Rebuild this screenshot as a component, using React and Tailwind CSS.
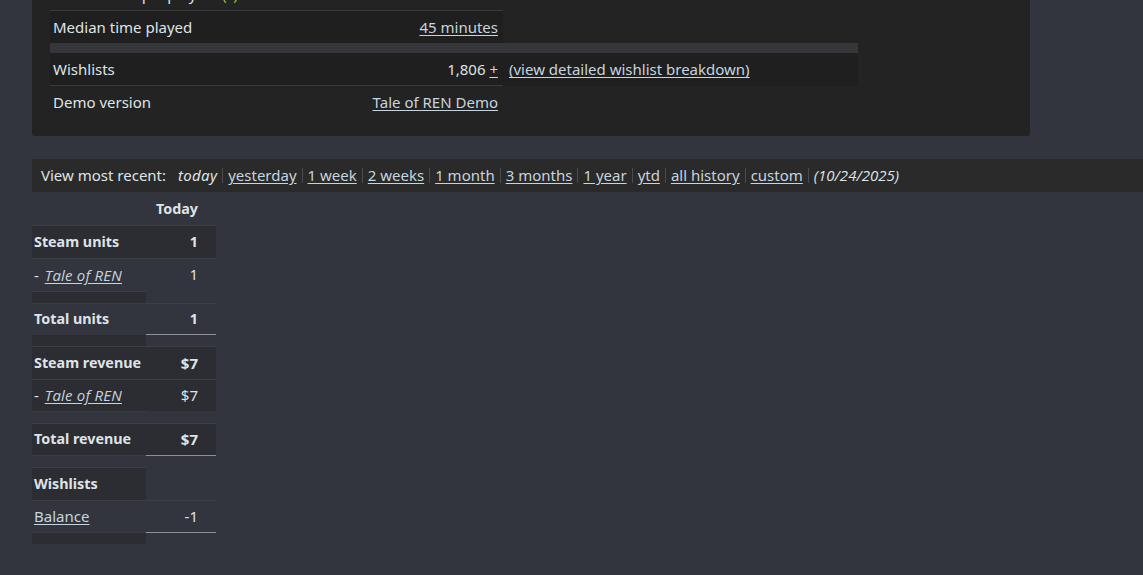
import React from "react";

const Sep = () => <span className="mx-[5px] inline-block h-[15px] w-px bg-[#4a4b4e] align-middle" />;
const L = ({ children, className = "" }) => (
  <a className={"text-[#c6d4df] underline underline-offset-2 " + className}>{children}</a>
);

function Row({ h, c1, c2, bg1 = "", bg2 = "", t1 = true, t2 = true, b1 = "", b2 = "" }) {
  return (
    <div className="flex">
      <div
        className={
          "flex w-[114px] items-center pl-[2px] " +
          (t1 ? "border-t border-[#3c3e44] " : "border-t border-transparent ") +
          bg1 + " " + b1
        }
        style={{ height: h }}
      >
        {c1}
      </div>
      <div
        className={
          "flex w-[70px] items-center justify-end pr-[18px] " +
          (t2 ? "border-t border-[#3c3e44] " : "border-t border-transparent ") +
          bg2 + " " + b2
        }
        style={{ height: h }}
      >
        {c2}
      </div>
    </div>
  );
}

const Game = () => (
  <span className="text-[15px]">
    -{" "}
    <L className="ml-[2px] font-['Open_Sans',sans-serif] italic tracking-[0.2px]">Tale of REN</L>
  </span>
);

export default function App() {
  const dark = "bg-[#2b2d33]";
  return (
    <div className="min-h-[575px] bg-[#32353e] font-['Noto_Sans',sans-serif] text-[15px] leading-none text-[#dfe3e6]">
      {/* top panel */}
      <div className="ml-[32px] w-[998px] rounded-b-[3px] bg-[#232323] pb-[18px] pl-[18px]">
        <div className="relative h-[11px] w-[453px] overflow-hidden border-b border-[#3a3a3a]">
          <div className="absolute bottom-[8px] left-[3px] whitespace-nowrap leading-[15px]">
            Lifetime unique players <span className="text-[#8bc53f]">(?)</span>
          </div>
        </div>
        <div className="flex h-[32px] w-[453px] items-center justify-between bg-[#1f1f1f] pl-[3px] pr-[5px]">
          <span>Median time played</span>
          <L>45 minutes</L>
        </div>
        <div className="h-[10px] w-[808px] bg-[#36373b]" />
        <div className="flex h-[33px] w-[808px] bg-[#1f1f1f]">
          <div className="flex w-[453px] items-center justify-between border-b border-[#3a3a3a] pl-[3px] pr-[5px]">
            <span>Wishlists</span>
            <span>
              1,806 <L>+</L>
            </span>
          </div>
          <div className="flex items-center pl-[6px]">
            <L>(view detailed wishlist breakdown)</L>
          </div>
        </div>
        <div className="flex h-[32px] w-[453px] items-center justify-between pl-[3px] pr-[5px]">
          <span>Demo version</span>
          <L>Tale of REN Demo</L>
        </div>
      </div>

      <div className="h-[23px]" />

      {/* view most recent bar */}
      <div className="ml-[32px] flex h-[33px] items-center whitespace-nowrap bg-[#2a2a2a] pl-[9px]">
        <span className="mr-[12px]">View most recent:</span>
        <i className="tracking-[0.3px]">today</i>
        <Sep />
        <L>yesterday</L>
        <Sep />
        <L>1 week</L>
        <Sep />
        <L>2 weeks</L>
        <Sep />
        <L>1 month</L>
        <Sep />
        <L>3 months</L>
        <Sep />
        <L>1 year</L>
        <Sep />
        <L>ytd</L>
        <Sep />
        <L>all history</L>
        <Sep />
        <L>custom</L>
        <Sep />
        <i className="font-['Open_Sans',sans-serif]">(10/24/2025)</i>
      </div>

      {/* data table */}
      <div className="ml-[32px] w-[184px] text-[14.3px]">
        <Row h={33} t1={false} t2={false} c2={<b>Today</b>} />
        <Row h={33} bg1={dark} bg2={dark} c1={<b>Steam units</b>} c2={<b>1</b>} />
        <Row h={33} c1={<Game />} c2="1" />
        <Row h={12} bg1={dark} t2={false} />
        <Row h={32} c1={<b>Total units</b>} c2={<b>1</b>} b2="border-b border-b-[#8e9094]" b1="border-b border-b-transparent" />
        <Row h={11} bg1={dark} t1={false} t2={false} />
        <Row h={33} bg1={dark} bg2={dark} c1={<b>Steam revenue</b>} c2={<b className="text-[15px]">$7</b>} />
        <Row h={32} bg1={dark} bg2={dark} c1={<Game />} c2={<span className="text-[15px]">$7</span>} />
        <Row h={12} t2={false} />
        <Row h={33} bg1={dark} bg2={dark} c1={<b>Total revenue</b>} c2={<b className="text-[15px]">$7</b>} b2="border-b border-b-[#8e9094]" b1="border-b border-b-[#3c3e44]" />
        <Row h={11} t1={false} t2={false} />
        <Row h={33} bg1={dark} t2={false} c1={<b>Wishlists</b>} />
        <Row h={33} c1={<L className="text-[15px]">Balance</L>} c2={<span className="text-[15px]">-1</span>} b2="border-b border-b-[#8e9094]" b1="border-b border-b-[#3c3e44]" />
        <Row h={11} bg1={dark} t1={false} t2={false} />
      </div>
    </div>
  );
}
